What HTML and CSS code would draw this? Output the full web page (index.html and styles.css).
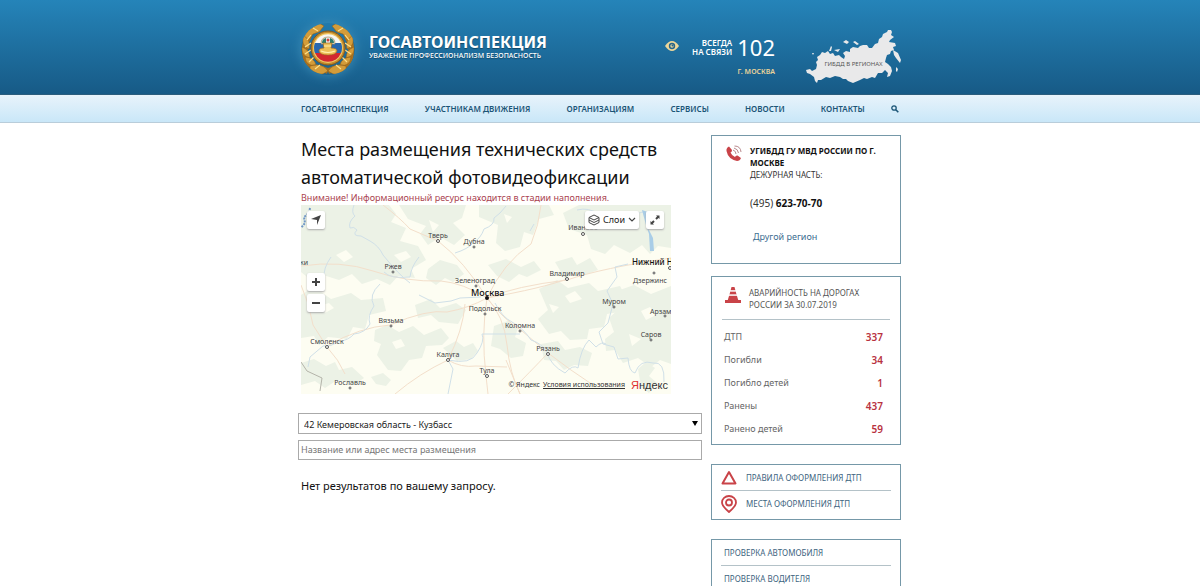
FILE: index.html
```html
<!DOCTYPE html>
<html lang="ru">
<head>
<meta charset="utf-8">
<title>Госавтоинспекция</title>
<meta name="viewport" content="width=device-width, initial-scale=1">
<link rel="stylesheet" href="styles.css">
</head>
<body>
<header class="header">
  <div class="wrap header-row">
    <a class="brand" href="#">
      <svg class="emblem" viewBox="0 0 54 52" aria-hidden="true">
        <g fill="none" stroke="#a87120" stroke-width="6" stroke-linejoin="round">
          <path d="M19 5L9 9L7 15C2 23 3 37 10 42L14 47L21 46L27 48"/>
          <path d="M35 5L45 9L47 15C52 23 51 37 44 42L40 47L33 46L27 48"/>
        </g>
        <g fill="#d39c3a" stroke="#8f5d17" stroke-width=".5">
          <path d="M5 1l6 3 7-4 5 3-5 6-6 2-6 8-5-4 4-6z"/>
          <path d="M49 1l-6 3-7-4-5 3 5 6 6 2 6 8 5-4-4-6z"/>
          <path d="M3 13q7 4 5 13q-9-4-5-13zM1 24q8 3 8 11q-9-2-8-11zM4 34q9 0 11 8q-10 2-11-8zM9 43q12-4 18 5q-9 7-18 0z"/>
          <path d="M51 13q-7 4-5 13q9-4 5-13zM53 24q-8 3-8 11q9-2 8-11zM50 34q-9 0-11 8q10 2 11-8zM45 43q-12-4-18 5q9 7 18 0z"/>
        </g>
        <path d="M6 17l4-5M4 24l6-4M4 31l6-4M8 39l5-5M14 46l5-4M48 17l-4-5M50 24l-6-4M50 31l-6-4M46 39l-5-5M40 46l-5-4M12 5l5 3M42 5l-5 3" stroke="#ffe08a" stroke-width="1.2"/>
        <circle cx="27" cy="25" r="17" fill="#c68d2c" stroke="#85571a"/>
        <circle cx="27" cy="25" r="15" fill="#f0c765"/>
        <path d="M14 20a14 14 0 0 1 26 0z" fill="#f7f7f5"/>
        <path d="M14 20h26q2 5 0 10H14q-2-5 0-10z" fill="#2767af"/>
        <path d="M14 30h26a14 14 0 0 1-26 0z" fill="#d22730"/>
        <path d="M20 21q0-7 7-7q7 0 7 7z" fill="#e5edf0" stroke="#a78a50" stroke-width=".7"/>
        <path d="M21 20q0-4 4-5v5zM29 15q4 1 4 5h-4z" fill="#307c69"/>
        <circle cx="27" cy="17" r="1.500" fill="#d4433c"/>
        <path d="M18 28q0-3 5-3l-1-5h9l-1 5q6 0 6 3q-1 4-9 4t-9-4z" fill="#edbf58" stroke="#a26b22" stroke-width=".7"/>
        <path d="M20 28q7 3 14 0M23 23h7" fill="none" stroke="#fff0ad" stroke-width="1.200"/>
      </svg>
      <span class="brand-text">
        <span class="brand-name">ГОСАВТОИНСПЕКЦИЯ</span>
        <span class="brand-motto">УВАЖЕНИЕ ПРОФЕССИОНАЛИЗМ БЕЗОПАСНОСТЬ</span>
      </span>
    </a>
    <button class="vision" type="button" aria-label="Версия для слабовидящих">
      <svg viewBox="0 0 14 10"><path d="M0 5q7-10 14 0q-7 10-14 0z" fill="#ecd79a"/><circle cx="7" cy="5" r="3.200" fill="#27658a"/><circle cx="7" cy="5" r="1.700" fill="#ecd79a"/><circle cx="7.500" cy="4.500" r="1" fill="#27658a"/></svg>
    </button>
    <div class="contact">
      <span class="contact-label">ВСЕГДА<br>НА СВЯЗИ</span>
      <a class="contact-number" href="tel:102">102</a>
      <a class="contact-city" href="#">Г. МОСКВА</a>
    </div>
    <a class="regions" href="#">
      <svg viewBox="0 0 95 56" aria-hidden="true">
        <g fill="#e9e9ea">
          <path d="M0 41L4 40L6 42L10 40L11 36L10 33L12 31L11 28L14 26L16 23L19 24L22 22L24 25L27 24L29 27L33 26L35 28L38 30L39 27L37 24L40 22L44 23L44 20L47 18L52 19L54 17L57 16L61 16L63 19L66 19L69 15L72 14L73 10L76 8L77 5L81 3L82 1L85 1L86 3L85 6L88 8L84 11L83 13L89 14L90 17L87 18L88 21L85 22L84 25L81 26L80 29L79 33L82 35L85 38L86 42L84 47L81 48L82 44L79 41L76 44L72 44L69 49L66 48L61 50L58 49L54 51L47 54L42 52L40 50L37 50L34 48L29 47L24 49L20 48L15 51L12 51L11 54L9 52L8 48L4 45L1 44Z"/>
          <path d="M87 21L92 24L95 31L94 34L90 29L88 26ZM6 24L8 24L7 26ZM37 13L40 11L43 13L41 15ZM47 13L49 12L53 15L51 16ZM90 38L92 40L91 43L90 42ZM23 22L25 17L26 18L25 22ZM28 21L34 20L32 23Z"/>
        </g>
      </svg>
      <span class="regions-label">ГИБДД В РЕГИОНАХ</span>
    </a>
  </div>
</header>
<nav class="nav">
  <div class="wrap nav-row">
    <a href="#">ГОСАВТОИНСПЕКЦИЯ</a>
    <a href="#">УЧАСТНИКАМ ДВИЖЕНИЯ</a>
    <a href="#">ОРГАНИЗАЦИЯМ</a>
    <a href="#">СЕРВИСЫ</a>
    <a href="#">НОВОСТИ</a>
    <a href="#">КОНТАКТЫ</a>
    <button class="search" type="button" aria-label="Поиск"><svg viewBox="0 0 8 8"><circle cx="3" cy="3" r="2.200" fill="none" stroke="#1b5577" stroke-width="1.300"/><path d="M4.800 4.800L7.300 7.300" stroke="#1b5577" stroke-width="1.600"/></svg></button>
  </div>
</nav>
<div class="wrap page">
  <main>
    <div class="intro">
      <h1>Места размещения технических средств автоматической фотовидеофиксации</h1>
      <p class="notice">Внимание! Информационный ресурс находится в стадии наполнения.</p>
      <div class="map">
        <svg class="map-canvas" viewBox="0 0 370 189" preserveAspectRatio="xMidYMid slice">
          <rect width="370" height="189" fill="#fdfdf2"/>
          <g fill="#ecf2e6">
            <path d="M0 0h88l7 9-5 8 15 6-6 13 18 5 8 14-15 9 4 9-17-2-8 9-13-6-15 5-10-10-13 6-16-5-12 5-10-8z"/>
            <path d="M98 0h67l-4 13-9 5 12 12-11 10-14-8-12 8-8-11 6-8-18-7zM178 0h70l5 10-15 4-6 16-9-3-4 15-15 4-9-8 2-18-19-8z"/>
            <path d="M262 8l16-8h92v43l-13-2-8 8-8-9-12 8-16-8-9 9-14-5-4-14-18-6zM254 57l17-5 5 8 13-7 8 12-13 5-9-4-11 8z"/>
            <path d="M238 84l18-9 11 8 21-5 9 8 22-5 7 13-8 13-12 2-3 13-15 2-2 10-17 1-9-9-12 3-11-15 10-9z"/>
            <path d="M316 86l17-6 17 9 20-8v78l-11-4-9 7-13-9-15 5-8-13-9 1-1-12 9-7-5-14 11-10z"/>
            <path d="M0 90l13-8 17 12 20-6 10 7 22-2 3 13-17 4-4 14-12-2-6 12-19-2-9 8-5-9-13 2z"/>
            <path d="M74 125l12-5 12 7 14-6 11 9 17-7 8 10-7 7-16 1-4 12-13 2-8 11-13-1-11-15 4-11-7-3zM114 100l16-6 9 9 16-5 10 7-8 14-19-2-8-7-13 3z"/>
            <path d="M0 158l13-4 12 7 9-4 4 8 13-3 12 11-9 6-18-4-12 8-10-7-14 4zM142 143l13-7 8 6 9-4 5 8-7 8-14 2z"/>
            <path d="M127 64l12-9 17 5 7 9-11 8-8-4-9 7-10-7zM187 60l18-6 15 8 13-6 7 9-14 7-8-3-10 8-12-6zM240 139l17-3 7 9 15-3 12 6-4 13-14-1-10 5-8-9-12-1z"/>
            <path d="M193 121l14-5 10 7-3 9 11 6-3 13-12 2-11-9-9-3zM337 164l8-7 9 6-6 8 8 7-8 10-8-6zM70 172l12-4 8 7-5 6-10-2z"/>
          </g>
          <g fill="#fdfdf2"><path d="M35 50l10-5 7 7-9 5zM93 50l12-4 5 6-10 5zM203 9l8 3-5 6zM285 12l13 3-6 9-8-4zM264 91l10-5 7 8-12 4zM340 106l9-4 6 8-10 5zM310 46l7 3-5 5zM91 137l9-3 4 7-9 3zM18 101l10-3 5 5-9 5zM128 15l10 5-6 7zM328 129l12 5-9 7zM248 99l10 3-6 6z"/></g>
          <g fill="none" stroke="#f3dfcb" stroke-width="1">
            <path d="M0 61q40-6 72 5t68 10q22 2 46 17 29-12 80-18 35-12 104-22M82 0q17 13 27 24l28 12q26 20 49 57M186 93q17 18 20 47t13 49M186 93q-6 36-1 78l2 18M186 93q-18 10-40 14-20-3-57 13-30 2-63 21M164 99q-2 26-17 56-28 13-53 34M186 93q16 21 35 33l26 22q22 17 45 32M0 80q9 20 12 40l14 22q12 13 18 27M205 155l14 34M247 148q-17 18-40 41M240 0q-2 20-10 39-28 19-44 54M266 74q-24 9-80 19M147 155q13 8 28 6l31 1"/>
          </g>
          <g fill="none" stroke="#d0e0e8" stroke-width="1">
            <path d="M53 0q-3 8 1 11-7 6-5 12 4-2 7 2-6 6 4 6l9 5q9 5 13 14 16 20 27 28M205 1q-6 8-12 12 1 7-10 11-3 9-11 14-5 6-18 10M118 52q-8 10-9 20-20 2-26-5M79 79q-12 11-6 22-7 10-4 18-5 9-16 10-5 6-16 8-7 5-15 4l-13 11-2 10M118 90l16 8 16-2 9-3 21-1M194 98q7 14 17 19 12 7 19 18 10 3 16 12 3 13 18 21 8-9 13-5 3-20 11-28l7 7q6-6 10-3M327 59l-13 3 2 10-10 14 6 13-5 19-9 9 4 12 11 3 4 12 10-1q1 14 7 15 5-14 18-10 12-2 11 19M276 5q12-3 21 4 12-1 20 3 12-1 25-5M30 52q-8 11-7 22M147 155l5 9-5 25M147 155q23 5 29-7 8-12 5-19h38M233 19l-4 7"/>
          </g>
          <path d="M341 5l4 15 3 9 1 17 4 0-1-13-4-8-1-18z" fill="#a9cde7"/>
          <path d="M9 3l-1 5-5 4 1 6-4 5" fill="none" stroke="#6f96c6" stroke-width="2" stroke-dasharray="2 1"/>
          <path d="M0 157l6 9 15 7-2 13" fill="none" stroke="#b4b4aa"/>
          <g fill="#fff" stroke="#555" stroke-width="1">
            <circle cx="137" cy="36" r="1.500"/><circle cx="173" cy="42" r="1"/><circle cx="282" cy="29" r="1.500"/><circle cx="92" cy="67" r="1"/><circle cx="175" cy="81" r="1"/><circle cx="184" cy="109" r="1"/><circle cx="219" cy="126" r="1"/><circle cx="90" cy="121" r="1"/><circle cx="26" cy="142" r="1.500"/><circle cx="147" cy="155" r="1.500"/><circle cx="247" cy="149" r="1.500"/><circle cx="186" cy="171" r="1.500"/><circle cx="49" cy="183" r="1"/><circle cx="266" cy="74" r="1.500"/><circle cx="313" cy="102" r="1"/><circle cx="353" cy="68" r="1"/><circle cx="364" cy="111" r="1"/><circle cx="350" cy="135" r="1"/><circle cx="369" cy="63" r="1.500"/>
          </g>
          <circle cx="186" cy="93" r="2" fill="#111"/>
          <g class="town" text-anchor="middle">
            <text x="137" y="33">Тверь</text><text x="282" y="25">Иваново</text><text x="266" y="71">Владимир</text><text x="174" y="78">Зеленоград</text><text x="184" y="106">Подольск</text><text x="26" y="139">Смоленск</text><text x="147" y="152">Калуга</text><text x="247" y="146">Рязань</text><text x="186" y="168">Тула</text>
            <text x="173" y="39">Дубна</text><text x="92" y="64">Ржев</text><text x="219" y="123">Коломна</text><text x="90" y="118">Вязьма</text><text x="49" y="180">Рославль</text><text x="313" y="99">Муром</text><text x="350" y="132">Саров</text>
          </g>
          <g class="town"><text x="332" y="78">Дзержинс</text><text x="349" y="109">Арзам</text><text x="-1" y="60">ки</text></g>
          <g class="town town-major"><text x="170" y="91">Москва</text><text class="town-large" x="331" y="60">Нижний Н</text></g>
        </svg>
        <button class="map-button locate" type="button" aria-label="Моё местоположение"><svg viewBox="0 0 12 12"><path d="M11 1L7 11V6L1 5z" fill="#444"/></svg></button>
        <div class="map-tools">
          <button class="map-button layers" type="button"><svg class="layers-icon" viewBox="0 0 12 12"><path d="M1 3.500L6 1l5 2.500L6 6zM1 3.500v5L6 11l5-2.500v-5M1 6l5 2.500L11 6" fill="none" stroke="#444"/></svg>Слои<svg class="chevron" viewBox="0 0 8 6"><path d="M1 1l3 3 3-3" fill="none" stroke="#444" stroke-width="1.200"/></svg></button>
          <button class="map-button" type="button" aria-label="Развернуть карту"><svg viewBox="0 0 12 12"><path d="M7 1.500h3.500V5zM5 10.500H1.500V7z" fill="#444"/><path d="M9.500 2.500l-2.500 2.500M2.500 9.500l2.500-2.500" stroke="#444" stroke-width="2"/></svg></button>
        </div>
        <div class="map-zoom">
          <button class="map-button" type="button" aria-label="Приблизить"><svg viewBox="0 0 12 12"><path d="M6 2v8M2 6h8" stroke="#444" stroke-width="2"/></svg></button>
          <button class="map-button" type="button" aria-label="Отдалить"><svg viewBox="0 0 12 12"><path d="M2 6h8" stroke="#444" stroke-width="2"/></svg></button>
        </div>
        <div class="map-copy"><span>© Яндекс</span> <a href="#">Условия использования</a> <a class="yandex" href="#"><b>Я</b>ндекс</a></div>
      </div>
    </div>
    <form class="filters">
      <select aria-label="Регион"><option>42 Кемеровская область - Кузбасс</option></select>
      <input type="text" aria-label="Название или адрес" placeholder="Название или адрес места размещения">
    </form>
    <p class="empty">Нет результатов по вашему запросу.</p>
  </main>
  <aside class="side">
    <section class="box office">
      <svg class="box-icon" viewBox="0 0 16 16" aria-hidden="true"><path d="M3 1.500L6 5Q6 7 4.500 7.500Q6 11 9 12Q10 10 11.500 10.500L15 13Q14 16 11 16Q2 14 0.500 6Q0 3 3 1.500z" fill="#c94348"/><path d="M7 5q3 1 3 4M8 3q4 1 4.500 5M8.500 1q6 0 6.500 6" fill="none" stroke="#b98a8d"/></svg>
      <div>
        <strong>УГИБДД ГУ МВД РОССИИ ПО Г. МОСКВЕ</strong>
        <p>ДЕЖУРНАЯ ЧАСТЬ:</p>
        <p class="phone">(495) <b>623-70-70</b></p>
        <a class="other" href="#">Другой регион</a>
      </div>
    </section>
    <section class="box stats">
      <div class="stats-head">
        <svg class="box-icon" viewBox="0 0 16 16" aria-hidden="true"><path d="M6.500 0h3l.8 3H5.700zM5.300 4.500h5.400l.8 3h-7zM4 9h8l1.200 4H16v3H0v-3h2.800z" fill="#c94348"/><path d="M5.700 3h4.600l.4 1.500H5.300zM4.500 7.500h7L12 9H4z" fill="#f3dcdc"/></svg>
        <h2>АВАРИЙНОСТЬ НА ДОРОГАХ РОССИИ ЗА 30.07.2019</h2>
      </div>
      <table>
        <tr><th scope="row">ДТП</th><td>337</td></tr>
        <tr><th scope="row">Погибли</th><td>34</td></tr>
        <tr><th scope="row">Погибло детей</th><td>1</td></tr>
        <tr><th scope="row">Ранены</th><td>437</td></tr>
        <tr><th scope="row">Ранено детей</th><td>59</td></tr>
      </table>
    </section>
    <section class="box links">
      <a href="#"><svg viewBox="0 0 16 18" aria-hidden="true"><path d="M8 3L14.500 14.500h-13z" fill="none" stroke="#c94348" stroke-width="2" stroke-linejoin="round"/></svg>ПРАВИЛА ОФОРМЛЕНИЯ ДТП</a>
      <a href="#"><svg viewBox="0 0 16 18" aria-hidden="true"><path d="M8 17Q1 11 1 7.500A7 6.500 0 0 1 15 7.500Q15 11 8 17z" fill="none" stroke="#c94348" stroke-width="1.800"/><circle cx="8" cy="7.500" r="3" fill="none" stroke="#c94348" stroke-width="1.800"/></svg>МЕСТА ОФОРМЛЕНИЯ ДТП</a>
    </section>
    <section class="box links checks">
      <a href="#">ПРОВЕРКА АВТОМОБИЛЯ</a>
      <a href="#">ПРОВЕРКА ВОДИТЕЛЯ</a>
    </section>
  </aside>
</div>
</body>
</html>
```
FILE: styles.css
```css
* { box-sizing: border-box; }
html { scrollbar-width: none; }
body { margin: 0; background: #fff; color: #111; font: 9px/12px "Noto Sans", sans-serif; }
h1, h2, p { margin: 0; font-weight: 400; }
a { color: inherit; text-decoration: none; }
button { padding: 0; border: 0; background: none; font: inherit; color: inherit; cursor: pointer; }
svg { display: block; }
.wrap { max-width: 604px; margin: 0 auto; padding: 0 1px 0 3px; }

.header { background: linear-gradient(#2584b9, #175a86); border-bottom: 1px solid #2b5d7d; }
.header-row { display: flex; align-items: flex-start; min-height: 94px; color: #fff; }
.brand { display: flex; align-items: flex-start; gap: 14px; padding-top: 23px; }
.emblem { width: 54px; height: 52px; border-radius: 50%; box-shadow: 0 0 12px #3f8fb8; }
.brand-text { display: grid; padding-top: 9px; text-shadow: 0 1px 1px #124766; }
.brand-name { font-size: 16px; line-height: 20px; font-weight: 700; }
.brand-motto { font-size: 7px; line-height: 8px; font-weight: 500; }
.vision { margin: 41px 0 0 auto; width: 14px; height: 10px; }
.contact { display: grid; grid-template-columns: auto auto; column-gap: 5px; margin: 35px 31px 0 13px; }
.contact-label { padding-top: 3px; font-size: 8px; line-height: 9px; font-weight: 600; text-align: right; }
.contact-number { font-size: 22px; line-height: 25px; }
.contact-city { grid-column: 1 / 3; padding-top: 6px; font-size: 7px; font-weight: 600; text-align: right; color: #ead49a; }
.regions { position: relative; width: 95px; margin-top: 29px; }
.regions-label { position: absolute; top: 30px; left: 0; width: 100%; text-align: center; font-size: 6px; line-height: 10px; color: #555; }

.nav { background: linear-gradient(#e8f3fb, #c9e7f8); border-bottom: 1px solid #b9cdda; color: #1b5577; }
.nav-row { display: flex; align-items: center; justify-content: space-between; min-height: 27px; font-size: 8px; font-weight: 600; }
.search { margin-left: -10px; padding-right: 2px; }
.search svg { width: 8px; height: 8px; }

.page { display: grid; grid-template-columns: minmax(0, 404px) 190px; gap: 9px; padding: 12px 0 0; }
.intro { padding: 0 31px 0 3px; }
h1 { font-size: 18px; line-height: 28px; }
.notice { font-size: 9px; line-height: 14px; color: #aa4350; }
.map { position: relative; overflow: hidden; }
.map-canvas { width: 100%; height: 189px; }
.town { font-size: 7px; fill: #444; }
.town-major { font-size: 9px; font-weight: 500; fill: #111; }
.town-large { font-size: 8px; }
.map-button { display: flex; align-items: center; justify-content: center; min-width: 18px; height: 18px; background: #fff; border-radius: 2px; box-shadow: 0 1px 2px #aaa; color: #222; }
.map-button svg { width: 12px; height: 12px; }
.locate { position: absolute; top: 6px; left: 6px; }
.map-tools { position: absolute; top: 6px; right: 7px; display: flex; gap: 7px; }
.map-zoom { position: absolute; top: 68px; left: 6px; display: grid; gap: 3px; }
.layers { gap: 3px; padding: 0 3px; }
.map-button .chevron { width: 8px; height: 6px; }
.map-copy { position: absolute; right: 3px; bottom: 3px; display: flex; align-items: center; gap: 3px; font-size: 7px; color: #333; }
.map-copy a { text-decoration: underline; }
.map-copy .yandex { margin-left: 3px; font: 11px/12px "Liberation Sans Narrow", "Liberation Sans", sans-serif; text-decoration: none; }
.yandex b { font-weight: 400; color: #e03030; }

.filters { display: grid; gap: 6px; padding-top: 19px; }
.filters select, .filters input { width: 100%; height: 20px; border: 1px solid #aaa; border-radius: 0; font: 9px/14px "Noto Sans", sans-serif; color: #222; }
.filters select { height: 21px; padding: 2px 5px 0; appearance: none; background: #fff url("data:image/svg+xml,%3Csvg xmlns='http://www.w3.org/2000/svg' width='6' height='5'%3E%3Cpath d='M0 0h6L3 5z'/%3E%3C/svg%3E") no-repeat right 3px center; }
.filters input { padding: 0 2px 1px; }
.filters input::placeholder { color: #777; opacity: 1; }
.empty { padding: 18px 3px 0; font-size: 11px; line-height: 16px; }

.side { display: flex; flex-direction: column; gap: 12px; color: #333; }
.box { border: 1px solid #7598a8; }
.box-icon { flex: none; width: 16px; height: 16px; }
.office { display: flex; gap: 8px; min-height: 129px; padding: 9px 14px; }
.office strong { color: #111; font-size: 8px; }
.office p { font-size: 8px; }
.office .phone { padding-top: 16px; font-size: 10px; }
.phone b { color: #111; }
.other { display: block; padding: 22px 3px 0; color: #3d6e91; }
.stats { padding: 10px 10px 3px; color: #555; }
.stats-head { display: flex; gap: 8px; padding: 0 3px 8px; border-bottom: 1px solid #b4c2c8; }
.stats h2 { font-size: 8px; line-height: 12px; }
table { width: 100%; border-collapse: collapse; margin: 5px 0 1px; }
th, td { height: 23px; padding: 0; font-size: 9px; }
th { padding-left: 2px; font-weight: 400; text-align: left; color: #666; }
td { padding-right: 7px; font-size: 10px; font-weight: 600; text-align: right; color: #b83240; }
.links { margin-top: 7px; padding: 0 9px 2px; color: #3d6480; }
.links a { display: flex; align-items: center; gap: 9px; height: 26px; font-size: 8px; border-bottom: 1px solid #b4c2c8; }
.links a:last-child { border-bottom: 0; }
.links svg { flex: none; width: 16px; height: 18px; }
.checks a { padding-left: 3px; }
```
